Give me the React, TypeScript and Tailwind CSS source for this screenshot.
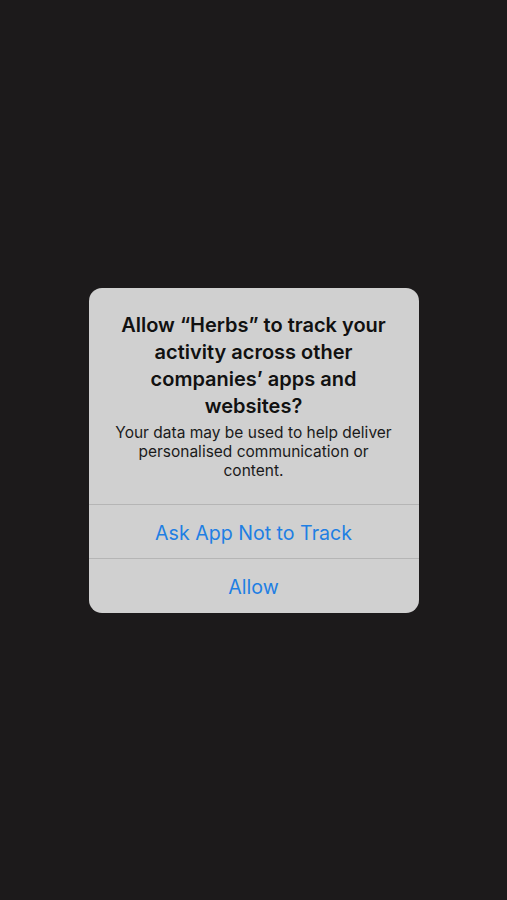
export default function App() {
    return (
        <div className="flex h-[900px] w-full items-center justify-center bg-[#1c1a1b] font-['Inter',sans-serif]">
            <div className="w-[330px] overflow-hidden rounded-[13px] bg-[#d0d0d0] text-center">
                <div className="px-5 pt-[24px] pb-[24px]">
                    <h1 className="text-[20px] font-semibold leading-[27px] text-[#111]">
                        Allow “Herbs” to track your activity across other companies’ apps and websites?
                    </h1>
                    <p className="mt-[3px] text-[15.5px] leading-[19px] text-[#1a1a1a]">
                        Your data may be used to help deliver personalised communication or content.
                    </p>
                </div>
                <div className="border-t border-[#b5b5b5] pt-[16px] pb-[12px] text-[19.6px] leading-[25px] text-[#1f7fe3]">
                    Ask App Not to Track
                </div>
                <div className="border-t border-[#b5b5b5] pt-[16px] pb-[13px] text-[19.6px] leading-[25px] text-[#1f7fe3]">
                    Allow
                </div>
            </div>
        </div>
    )
}
